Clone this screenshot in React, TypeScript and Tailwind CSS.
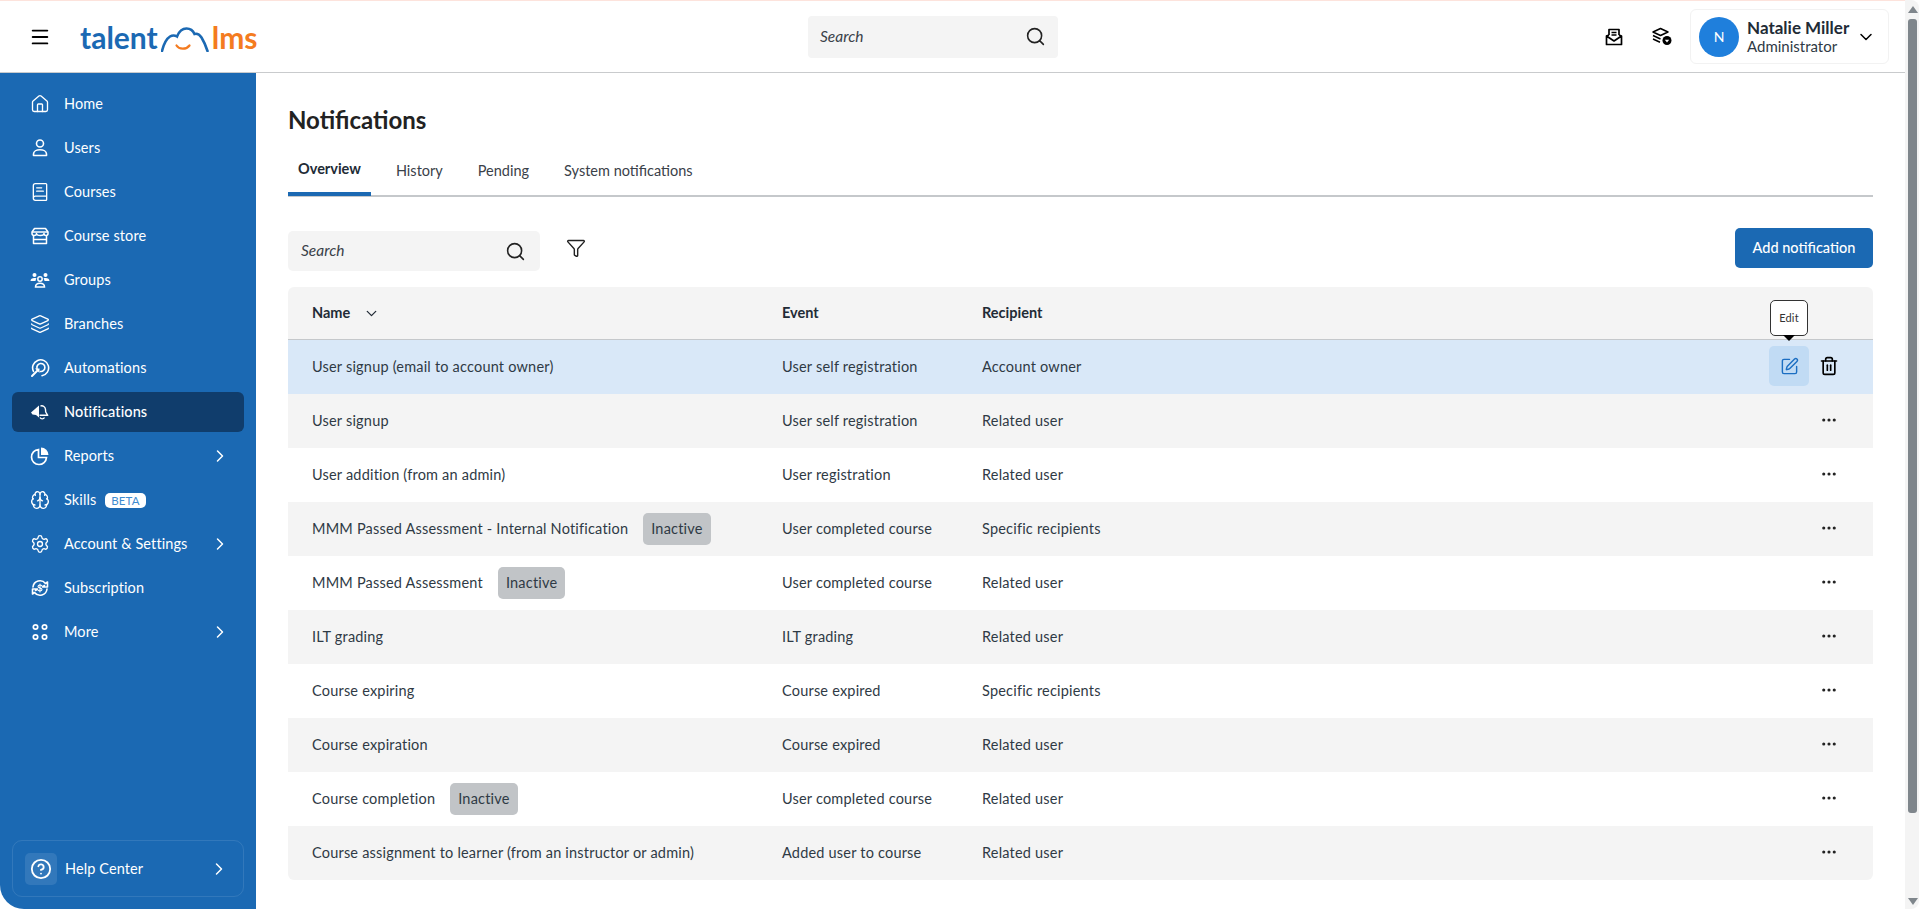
import React from 'react';
import {
  BookText,
  Brain,
  ChevronDown,
  ChevronRight,
  CircleHelp,
  Funnel,
  House,
  Layers,
  Menu,
  Search,
  Settings,
  SquarePen,
  Trash2,
  Ellipsis,
} from 'lucide-react';

const UserIcon = () => (
  <svg width="20" height="20" viewBox="0 0 20 20" fill="none" stroke="currentColor" strokeWidth="1.600" strokeLinejoin="round">
    <circle cx="10" cy="5.500" r="3.500" />
    <path d="M3.500 17.500v-1.500c0-2.500 3-4.200 6.500-4.200s6.500 1.700 6.500 4.200v1.500z" />
  </svg>
);

const StoreIcon = () => (
  <svg width="20" height="20" viewBox="0 0 20 20" fill="none" stroke="currentColor" strokeWidth="1.500" strokeLinejoin="round">
    <path d="M4.500 2.500h11l2.500 3.500v1.500c0 1.300-1 2-2 2s-2-.7-2-2c0 1.300-1.700 2-3.500 2S6.500 8.800 6.500 7.500c0 1.300-1 2-2.200 2S2 8.800 2 7.500V6z" />
    <path d="M2 6h16" />
    <path d="M3.500 9.500v8h13v-8M3.500 13.500h13" />
  </svg>
);

const GroupsIcon = () => (
  <svg width="20" height="20" viewBox="0 0 20 20" fill="currentColor">
    <circle cx="4.500" cy="5" r="2" />
    <circle cx="15.500" cy="5" r="2" />
    <path d="M0.500 11c0-2 1.500-3 4-3 .8 0 1.500.1 2 .4-.6.7-1 1.600-1 2.600z" />
    <path d="M19.500 11c0-2-1.500-3-4-3-.8 0-1.500.1-2 .4.600.7 1 1.600 1 2.600z" />
    <circle cx="10" cy="9" r="2.200" fill="none" stroke="currentColor" strokeWidth="1.500" />
    <path d="M5.500 17c0-2.500 2-3.800 4.500-3.800s4.500 1.300 4.500 3.800z" fill="none" stroke="currentColor" strokeWidth="1.500" />
  </svg>
);

const AutomationIcon = () => (
  <svg width="20" height="20" viewBox="0 0 20 20" fill="none" stroke="currentColor" strokeWidth="1.600" strokeLinecap="round">
    <path d="M3.500 13.500A8 8 0 1 1 12 17.700" />
    <path d="M7 10.500a4 4 0 1 1 3.500 3" />
    <path d="M2 18l6-6" strokeWidth="2" />
    <path d="M5 10.500h4.500V15z" fill="currentColor" stroke="none" />
  </svg>
);

const NotifyIcon = () => (
  <svg width="20" height="20" viewBox="0 0 20 20" fill="none" stroke="currentColor" strokeWidth="1.400" strokeLinejoin="round">
    <path d="M9 3.500L1 10.500l1.500 2 3.500.5 3 2.500z" fill="currentColor" stroke="none" />
    <path d="M10.500 4c2.500-.7 4.800.8 5 3.500l.2 2.500 2 3.300H9.500" />
    <path d="M10 15.500a2.500 2.500 0 0 0 4.500 0" />
  </svg>
);

const ReportsIcon = () => (
  <svg width="20" height="20" viewBox="0 0 20 20" fill="none" stroke="currentColor" strokeWidth="1.700">
    <path d="M8.500 3.500a7.500 7.500 0 1 0 8 8H8.500z" />
    <path d="M11 1.500a7.500 7.500 0 0 1 7.500 7.500H11z" fill="currentColor" stroke="none" />
  </svg>
);

const SubscriptionIcon = () => (
  <svg width="20" height="20" viewBox="0 0 20 20" fill="none" stroke="currentColor" strokeWidth="1.600" strokeLinecap="round" strokeLinejoin="round">
    <path d="M3 9a7 7 0 0 1 12.500-3.500L17.500 4v5h-5l2-1.500" />
    <path d="M17 11a7 7 0 0 1-12.500 3.500L2.500 16v-5h5l-2 1.500" />
    <path d="M12 7.800c-.5-.6-1.200-.8-2-.8-1.100 0-2 .6-2 1.500s.9 1.300 2 1.500 2 .6 2 1.500-.9 1.500-2 1.500c-.8 0-1.500-.2-2-.8M10 6v8" strokeWidth="1.100" />
  </svg>
);

const MoreIcon = () => (
  <svg width="20" height="20" viewBox="0 0 20 20" fill="none" stroke="currentColor" strokeWidth="1.700">
    <circle cx="5.500" cy="5" r="2.200" />
    <circle cx="14.500" cy="5" r="2.200" />
    <circle cx="5.500" cy="15" r="2.200" />
    <circle cx="14.500" cy="15" r="2.200" />
  </svg>
);

const InboxIcon = () => (
  <svg width="20" height="20" viewBox="0 0 20 20" fill="none" stroke="currentColor" strokeWidth="1.700" strokeLinejoin="round">
    <path d="M5 8V2.500h10V8" />
    <path d="M7.500 5.500h5M7.500 8h5" strokeWidth="1.300" />
    <path d="M2.500 9l2.500-1v0M17.500 9L15 8" />
    <path d="M2.500 9v8.500h15V9L10 14z" />
  </svg>
);

const CoursesBadgeIcon = () => (
  <svg width="20" height="20" viewBox="0 0 20 20" fill="none" stroke="currentColor" strokeWidth="1.500" strokeLinejoin="round">
    <path d="M8.500 1.500L16 5l-7.500 3.500L1 5z" />
    <path d="M1 8.500L8.500 12M1 12l7 3.200" />
    <circle cx="15" cy="13.500" r="4.500" fill="currentColor" stroke="none" />
    <path d="M12.800 12.800h4.400L15 15.500z" fill="#fff" stroke="none" />
  </svg>
);

const CloudLogo = () => (
  <svg width="48" height="25" viewBox="0 0 48 25" fill="none" className="mx-[3px]">
    <path
      d="M1 24C2.500 18 5 12 9 9.500c2.500-1.500 5-1.200 7 0C18 4.500 21.500 1.500 25.500 1.500c3.500 0 6.500 2 8 5.500 2.500-.8 5 .5 7 3.500 2.500 4 4.500 9 6 13.500"
      stroke="#1b69b3"
      strokeWidth="2.600"
      strokeLinecap="round"
    />
    <path d="M15.500 18.500c2.500 4.200 10 4.200 13 0" stroke="#f47b20" strokeWidth="2.200" strokeLinecap="round" />
  </svg>
);

const navItems = [
  { label: 'Home', icon: <House size={20} strokeWidth={1.6} /> },
  { label: 'Users', icon: <UserIcon /> },
  { label: 'Courses', icon: <BookText size={20} strokeWidth={1.6} /> },
  { label: 'Course store', icon: <StoreIcon /> },
  { label: 'Groups', icon: <GroupsIcon /> },
  { label: 'Branches', icon: <Layers size={20} strokeWidth={1.6} /> },
  { label: 'Automations', icon: <AutomationIcon /> },
  { label: 'Notifications', icon: <NotifyIcon />, active: true },
  { label: 'Reports', icon: <ReportsIcon />, arrow: true },
  { label: 'Skills', icon: <Brain size={20} strokeWidth={1.6} />, beta: true },
  { label: 'Account & Settings', icon: <Settings size={20} strokeWidth={1.6} />, arrow: true },
  { label: 'Subscription', icon: <SubscriptionIcon /> },
  { label: 'More', icon: <MoreIcon />, arrow: true },
];

const rows = [
  { name: 'User signup (email to account owner)', event: 'User self registration', recipient: 'Account owner', hovered: true },
  { name: 'User signup', event: 'User self registration', recipient: 'Related user' },
  { name: 'User addition (from an admin)', event: 'User registration', recipient: 'Related user' },
  { name: 'MMM Passed Assessment - Internal Notification', event: 'User completed course', recipient: 'Specific recipients', inactive: true },
  { name: 'MMM Passed Assessment', event: 'User completed course', recipient: 'Related user', inactive: true },
  { name: 'ILT grading', event: 'ILT grading', recipient: 'Related user' },
  { name: 'Course expiring', event: 'Course expired', recipient: 'Specific recipients' },
  { name: 'Course expiration', event: 'Course expired', recipient: 'Related user' },
  { name: 'Course completion', event: 'User completed course', recipient: 'Related user', inactive: true },
  { name: 'Course assignment to learner (from an instructor or admin)', event: 'Added user to course', recipient: 'Related user' },
];

function Header() {
  return (
    <header className="flex h-[72px] items-center border-b border-[#c9cbcd] bg-white">
      <div className="flex w-[808px] shrink-0 items-center">
        <Menu size={22} strokeWidth={2} className="ml-[29px] text-black" />
        <div className="ml-[29px] flex items-end text-[30px] font-bold leading-[30px]">
          <span className="text-[#1b69b3]">talent</span>
          <CloudLogo />
          <span className="text-[#f47b20]">lms</span>
        </div>
      </div>
      <div className="flex h-[42px] w-[250px] items-center justify-between rounded-[4px] bg-[#f4f4f4] pl-3 pr-3">
        <span className="text-[15.5px] italic text-[#3a4149]">Search</span>
        <Search size={21} strokeWidth={1.8} className="text-[#222]" />
      </div>
      <div className="ml-auto flex items-center pr-[16px]">
        <span className="mr-[28px] text-black"><InboxIcon /></span>
        <span className="mr-[18px] text-black"><CoursesBadgeIcon /></span>
        <div className="flex h-[55px] w-[199px] items-center rounded-[6px] border border-[#f2f2f2] pl-[8px] pr-[12px]">
          <div className="flex h-[40px] w-[40px] items-center justify-center rounded-full bg-[#1f7fdc] text-[14px] text-white">N</div>
          <div className="ml-[8px] flex flex-col leading-[19px]">
            <span className="text-[17px] font-bold text-[#222b36]">Natalie Miller</span>
            <span className="text-[15px] text-[#2f3a45]">Administrator</span>
          </div>
          <ChevronDown size={20} strokeWidth={1.8} className="ml-auto text-black" />
        </div>
      </div>
    </header>
  );
}

function Sidebar() {
  return (
    <aside className="flex w-[256px] shrink-0 flex-col justify-between rounded-bl-[24px] bg-[#1b69b3] px-[12px] pb-[12px] pt-[11px] tracking-[0.1px] text-white">
      <nav className="flex flex-col gap-[4px]">
        {navItems.map(item => (
          <div
            key={item.label}
            className={`flex h-[40px] items-center gap-[14px] rounded-[6px] pl-[18px] pr-[14px] text-[14.5px] ${item.active ? 'bg-[#103d6c] font-medium' : ''}`}
          >
            {item.icon}
            <span>{item.label}</span>
            {item.beta && (
              <span className="-ml-[5px] rounded-[5px] bg-white px-[6px] text-[11.5px] leading-[15px] text-[#3f8bd0]">BETA</span>
            )}
            {item.arrow && <ChevronRight size={20} strokeWidth={1.8} className="ml-auto" />}
          </div>
        ))}
      </nav>
      <div className="flex h-[57px] items-center rounded-[10px] border border-white/10 pl-[12px] pr-[14px]">
        <div className="flex h-[32px] w-[32px] items-center justify-center rounded-[5px] bg-white/10">
          <CircleHelp size={22} strokeWidth={2} />
        </div>
        <span className="ml-[8px] text-[14.5px]">Help Center</span>
        <ChevronRight size={20} strokeWidth={1.8} className="ml-auto" />
      </div>
    </aside>
  );
}

function Tabs() {
  const tabs = ['Overview', 'History', 'Pending', 'System notifications'];
  return (
    <div className="mt-[15px] flex h-[47px] gap-[15px] border-b-[2px] border-[#c5c8cb]">
      {tabs.map((tab, i) => (
        <div
          key={tab}
          className={`flex h-[46px] items-center px-[10px] pb-[4px] text-[14.5px] ${i === 0 ? 'border-b-[4px] border-[#1b69b3] pb-0 font-bold text-[#222b36]' : 'text-[#3a4149]'}`}
        >
          {tab}
        </div>
      ))}
    </div>
  );
}

function Table() {
  return (
    <div className="mt-[16px] overflow-hidden rounded-[6px] text-[14.5px] text-[#2f3a45]">
      <div className="grid h-[53px] grid-cols-[470px_200px_1fr] items-center border-b-[1px] border-[#c5c8cb] bg-[#f4f4f4] pl-[24px] font-bold text-[#222b36]">
        <div className="flex items-center gap-[13px]">
          Name <ChevronDown size={17} strokeWidth={1.8} />
        </div>
        <div>Event</div>
        <div>Recipient</div>
      </div>
      {rows.map((row, i) => (
        <div
          key={row.name}
          className={`grid h-[54px] grid-cols-[470px_200px_1fr_auto] items-center pl-[24px] pr-[24px] tracking-[0.2px] ${row.hovered ? 'bg-[#d9e8f8]' : i % 2 === 1 ? 'bg-[#f4f4f4]' : 'bg-white'}`}
        >
          <div className="flex items-center">
            {row.name}
            {row.inactive && (
              <span className="ml-[15px] flex h-[32px] items-center rounded-[5px] bg-[#c1c4c7] px-[8px]">Inactive</span>
            )}
          </div>
          <div>{row.event}</div>
          <div>{row.recipient}</div>
          {row.hovered ? (
            <div className="relative -top-px flex items-center">
              <div className="absolute -top-[46px] left-[1px] flex h-[36px] w-[38px] items-center justify-center rounded-[5px] border border-[#333] bg-white text-[11px] text-[#333]">
                Edit
                <span className="absolute -bottom-[6px] left-[12px] h-0 w-0 border-x-[6px] border-t-[6px] border-x-transparent border-t-black" />
              </div>
              <div className="flex h-[40px] w-[40px] items-center justify-center rounded-[5px] bg-[#c1dbf4] text-[#1b6ec2]">
                <SquarePen size={19} strokeWidth={1.8} />
              </div>
              <div className="flex h-[40px] w-[40px] items-center justify-center text-black">
                <Trash2 size={20} strokeWidth={2} />
              </div>
            </div>
          ) : (
            <div className="flex w-[40px] justify-center pb-[2px] text-[#222]">
              <Ellipsis size={18} strokeWidth={2.2} />
            </div>
          )}
        </div>
      ))}
    </div>
  );
}

export default function App() {
  return (
    <div className="flex h-[909px] w-full overflow-hidden bg-white font-['Lato',sans-serif]">
      <div className="flex min-w-0 flex-1 flex-col">
        <div className="h-[1px] bg-[#fde3dc]" />
        <Header />
        <div className="flex min-h-0 flex-1">
          <Sidebar />
          <main className="min-w-0 flex-1 pl-[32px] pr-[32px] pt-[32px]">
            <h1 className="h-[30px] text-[24px] font-bold leading-[30px] text-[#222]">Notifications</h1>
            <Tabs />
            <div className="mt-[31px] flex items-start">
              <div className="mt-[3px] flex h-[40px] w-[252px] items-center justify-between rounded-[5px] bg-[#f4f4f4] pl-[13px] pr-[14px]">
                <span className="text-[15.5px] italic text-[#3a4149]">Search</span>
                <Search size={21} strokeWidth={1.8} className="text-[#222]" />
              </div>
              <Funnel size={20} strokeWidth={1.7} className="ml-[26px] mt-[10px] text-[#222]" />
              <button className="ml-auto h-[40px] w-[138px] rounded-[5px] bg-[#1b69b3] text-[14.5px] font-medium text-white">
                Add notification
              </button>
            </div>
            <Table />
          </main>
        </div>
      </div>
      <div className="flex w-[14px] shrink-0 flex-col rounded-r-[8px] bg-[#f4f4f4] pl-[3px]">
        <div className="mt-[6px] h-0 w-0 border-x-[5px] border-b-[7px] border-x-transparent border-b-[#7f868c]" />
        <div className="mt-[6px] h-[794px] w-[9px] rounded-[3px] bg-[#7f868c]" />
        <div className="mt-[85px] h-0 w-0 border-x-[5px] border-t-[7px] border-x-transparent border-t-[#7f868c]" />
      </div>
    </div>
  );
}
